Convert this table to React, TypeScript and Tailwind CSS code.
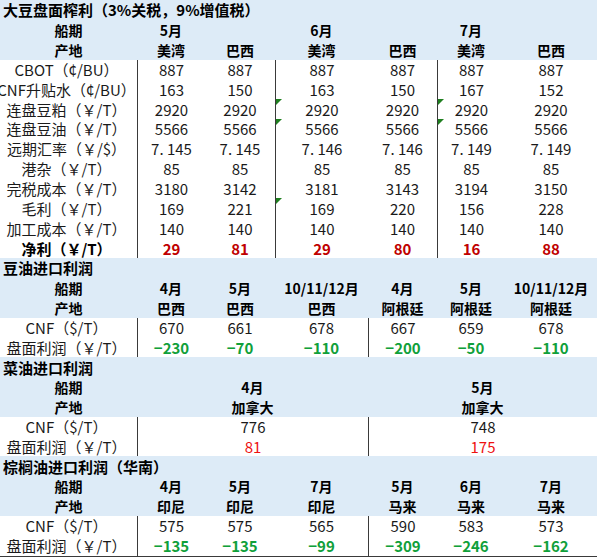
import React from "react";

const cols = "grid grid-cols-[137px_68px_70px_93px_69px_68px_92px]";
const font = "font-['Noto_Sans_CJK_SC',sans-serif]";
const rowH = "h-[19.85px] leading-none";

type Tone = "plain" | "netRed" | "red" | "green";

const toneClass: Record<Tone, string> = {
  plain: "text-[#1a1a1a]",
  netRed: "text-[#c00000] font-bold",
  red: "text-[#ee1111]",
  green: "text-[#10a03a] font-bold",
};

function Flag() {
  return (
    <span className="absolute left-0 top-0 h-0 w-0 border-t-[6px] border-r-[6px] border-t-[#1f7f1f] border-r-transparent" />
  );
}

function Title({ text }: { text: string }) {
  return (
    <div className={`flex ${rowH} w-[597px] items-center bg-[#ddebf7] pl-[3px] text-[15px] font-bold text-black`}>
      {text}
    </div>
  );
}

function HeaderRow({ label, cells }: { label: string; cells: { text: string; span?: number }[] }) {
  return (
    <div className={`${cols} ${rowH} w-[597px] bg-[#ddebf7] text-[14px] font-bold text-black`}>
      <div className="flex items-center justify-center">{label}</div>
      {cells.map((c, i) => (
        <div
          key={i}
          className={`flex items-center justify-center whitespace-nowrap ${
            c.span === 3 ? "col-span-3" : ""
          }`}
        >
          {c.text}
        </div>
      ))}
    </div>
  );
}

function DataRow({
  label,
  values,
  lines,
  tone = "plain",
  bold = false,
  flags = [],
  spans,
}: {
  label: string;
  values: string[];
  lines: number[];
  tone?: Tone;
  bold?: boolean;
  flags?: number[];
  spans?: boolean;
}) {
  let col = 0;
  return (
    <div className={`${cols} ${rowH} bg-white text-[15px]`}>
      <div
        className={`flex items-center justify-center whitespace-nowrap pr-1 text-[#1a1a1a] ${
          bold ? "font-bold text-black" : ""
        }`}
      >
        {label}
      </div>
      {values.map((v, i) => {
        const start = col;
        col += spans ? 3 : 1;
        return (
          <div
            key={i}
            className={`relative flex items-center justify-center whitespace-nowrap ${toneClass[tone]} ${
              lines.includes(start) ? "border-l border-[#3a3a3a]" : ""
            } ${spans ? "col-span-3" : ""}`}
          >
            {flags.includes(start) && <Flag />}
            {v}
          </div>
        );
      })}
    </div>
  );
}

const soyRows: { label: string; values: string[]; tone?: Tone; bold?: boolean; flags?: number[] }[] = [
  { label: "CBOT（¢/BU）", values: ["887", "887", "887", "887", "887", "887"] },
  { label: "CNF升贴水（¢/BU）", values: ["163", "150", "163", "150", "167", "152"] },
  { label: "连盘豆粕（￥/T）", values: ["2920", "2920", "2920", "2920", "2920", "2920"], flags: [2, 4] },
  { label: "连盘豆油（￥/T）", values: ["5566", "5566", "5566", "5566", "5566", "5566"], flags: [2, 4] },
  { label: "远期汇率（￥/$）", values: ["7. 145", "7. 145", "7. 146", "7. 146", "7. 149", "7. 149"] },
  { label: "港杂（￥/T）", values: ["85", "85", "85", "85", "85", "85"] },
  { label: "完税成本（￥/T）", values: ["3180", "3142", "3181", "3143", "3194", "3150"] },
  { label: "毛利（￥/T）", values: ["169", "221", "169", "220", "156", "228"], flags: [2] },
  { label: "加工成本（￥/T）", values: ["140", "140", "140", "140", "140", "140"] },
  { label: "净利（￥/T）", values: ["29", "81", "29", "80", "16", "88"], tone: "netRed", bold: true },
];

export default function App() {
  return (
    <div className={`h-[557px] w-[600px] overflow-hidden bg-white ${font}`}>
      {/* 大豆 */}
      <Title text="大豆盘面榨利（3%关税，9%增值税）" />
      <HeaderRow
        label="船期"
        cells={[{ text: "5月" }, { text: "" }, { text: "6月" }, { text: "" }, { text: "7月" }, { text: "" }]}
      />
      <HeaderRow
        label="产地"
        cells={["美湾", "巴西", "美湾", "巴西", "美湾", "巴西"].map((t) => ({ text: t }))}
      />
      {soyRows.map((r) => (
        <DataRow key={r.label} {...r} lines={[0, 2, 4]} />
      ))}

      {/* 豆油 */}
      <Title text="豆油进口利润" />
      <HeaderRow
        label="船期"
        cells={["4月", "5月", "10/11/12月", "4月", "5月", "10/11/12月"].map((t) => ({ text: t }))}
      />
      <HeaderRow
        label="产地"
        cells={["巴西", "巴西", "巴西", "阿根廷", "阿根廷", "阿根廷"].map((t) => ({ text: t }))}
      />
      <DataRow label="CNF（$/T）" values={["670", "661", "678", "667", "659", "678"]} lines={[0, 3]} />
      <DataRow
        label="盘面利润（￥/T）"
        values={["−230", "−70", "−110", "−200", "−50", "−110"]}
        lines={[0, 3]}
        tone="green"
      />

      {/* 菜油 */}
      <Title text="菜油进口利润" />
      <HeaderRow label="船期" cells={[{ text: "4月", span: 3 }, { text: "5月", span: 3 }]} />
      <HeaderRow label="产地" cells={[{ text: "加拿大", span: 3 }, { text: "加拿大", span: 3 }]} />
      <DataRow label="CNF（$/T）" values={["776", "748"]} lines={[0, 3]} spans />
      <DataRow label="盘面利润（￥/T）" values={["81", "175"]} lines={[0, 3]} tone="red" spans />

      {/* 棕榈油 */}
      <Title text="棕榈油进口利润（华南）" />
      <HeaderRow
        label="船期"
        cells={["4月", "5月", "7月", "5月", "6月", "7月"].map((t) => ({ text: t }))}
      />
      <HeaderRow
        label="产地"
        cells={["印尼", "印尼", "印尼", "马来", "马来", "马来"].map((t) => ({ text: t }))}
      />
      <DataRow label="CNF（$/T）" values={["575", "575", "565", "590", "583", "573"]} lines={[0, 3]} />
      <div className="w-[597px] border-b border-[#3a3a3a]">
        <DataRow
          label="盘面利润（￥/T）"
          values={["−135", "−135", "−99", "−309", "−246", "−162"]}
          lines={[0, 3]}
          tone="green"
        />
      </div>
    </div>
  );
}
